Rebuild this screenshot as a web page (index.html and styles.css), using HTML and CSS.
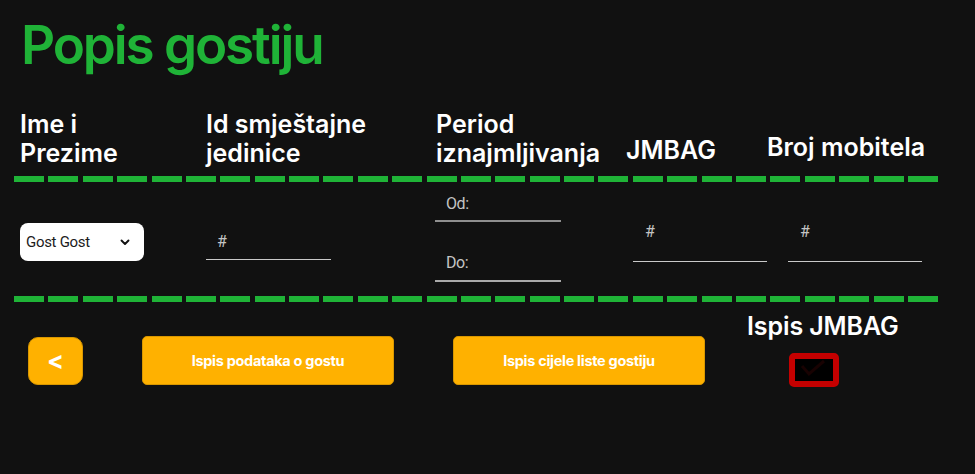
FILE: index.html
```html
<!DOCTYPE html>
<html lang="hr">
<head>
<meta charset="utf-8">
<title>Popis gostiju</title>
<link rel="stylesheet" href="styles.css">
</head>
<body>
<main class="page">
  <h1 class="title">Popis gostiju</h1>

  <div class="grid head-row">
    <div class="th th-name">Ime i<br>Prezime</div>
    <div class="th th-id">Id smještajne<br>jedinice</div>
    <div class="th th-period">Period<br>iznajmljivanja</div>
    <div class="th th-jmbag">JMBAG</div>
    <div class="th th-phone">Broj mobitela</div>
  </div>

  <div class="dash"></div>

  <div class="grid data-row">
    <div class="cell cell-name">
      <div class="select">
        <select class="select-input">
          <option>Gost Gost</option>
        </select>
        <svg class="chevron" width="10" height="7" viewBox="0 0 10 7"><path d="M1.5 1.5 5 5 8.5 1.5" fill="none" stroke="#111" stroke-width="1.9" stroke-linecap="round" stroke-linejoin="round"/></svg>
      </div>
    </div>
    <div class="cell cell-id">
      <input class="field field-id" type="text" placeholder="#">
    </div>
    <div class="cell cell-period">
      <input class="field field-from" type="text" placeholder="Od:">
      <input class="field field-to" type="text" placeholder="Do:">
    </div>
    <div class="cell cell-jmbag">
      <input class="field field-low" type="text" placeholder="#">
    </div>
    <div class="cell cell-phone">
      <input class="field field-low" type="text" placeholder="#">
    </div>
  </div>

  <div class="dash"></div>

  <div class="actions">
    <button class="btn btn-back" type="button">&lt;</button>
    <button class="btn btn-wide btn-guest" type="button">Ispis podataka o gostu</button>
    <button class="btn btn-wide btn-list" type="button">Ispis cijele liste gostiju</button>
    <div class="jmbag-toggle">
      <div class="toggle-label">Ispis JMBAG</div>
      <div class="checkbox">
        <svg width="38" height="22" viewBox="0 0 38 22"><path d="M7 7 14 15 29 2" fill="none" stroke="#180202" stroke-width="3"/></svg>
      </div>
    </div>
  </div>
</main>
</body>
</html>
```
FILE: styles.css
```css
* { box-sizing: border-box; }

html, body {
  margin: 0;
  background: #111111;
}

body {
  font-family: "Inter", "DejaVu Sans", sans-serif;
  color: #ffffff;
  width: 975px;
  height: 474px;
  overflow: hidden;
}

.page {
  display: flex;
  flex-direction: column;
}

.title {
  margin: 15px 0 0 21px;
  height: 60px;
  font-size: 53px;
  line-height: 60px;
  font-weight: 600;
  letter-spacing: -2.1px;
  color: #1fb337;
}

.grid {
  display: grid;
  grid-template-columns: 186px 230px 190px 141px 177px;
  width: 924px;
  margin-left: 14px;
  align-items: start;
}

.head-row {
  height: 101px;
}

.th {
  padding-left: 6px;
  font-size: 25px;
  line-height: 29px;
  font-weight: 600;
  letter-spacing: 0;
  margin-top: 35px;
  white-space: nowrap;
}

.th-jmbag { margin-top: 61px; }
.th-phone { margin-top: 58px; }

.dash {
  width: 924px;
  height: 6px;
  margin-left: 14px;
  background: repeating-linear-gradient(90deg, #1fb337 0 30px, transparent 30px 34.38px);
}

.data-row {
  height: 114px;
}

.cell { padding-left: 6px; }

.cell-name { margin-top: 41px; }
.cell-id { margin-top: 42px; }
.cell-period { margin-top: 4px; display: flex; flex-direction: column; gap: 22px; padding-left: 5px; }
.cell-jmbag { margin-top: 40px; padding-left: 13px; }
.cell-phone { margin-top: 40px; padding-left: 27px; }

.select {
  position: relative;
  width: 124px;
  height: 38px;
}

.select-input {
  appearance: none;
  -webkit-appearance: none;
  width: 100%;
  height: 100%;
  border: none;
  border-radius: 8px;
  background: #ffffff;
  padding: 0 0 0 6px;
  font-family: "Roboto", sans-serif;
  font-size: 15px;
  letter-spacing: -0.3px;
  color: #1c1c1c;
  outline: none;
}

.chevron {
  position: absolute;
  right: 14px;
  top: 16px;
}

.field {
  display: block;
  background: transparent;
  border: none;
  border-bottom: 1px solid #c9c9c9;
  outline: none;
  font-family: "Roboto", sans-serif;
  font-size: 16px;
  letter-spacing: -0.4px;
  color: #dddddd;
  padding: 0 11px;
}

.field::placeholder {
  color: #c4c4c4;
  opacity: 1;
}

.field-id { width: 125px; height: 36px; }

.field-from, .field-to { width: 126px; height: 36px; }
.field-from { border-bottom: 2px solid #8f8f8f; }
.field-to { height: 38px; border-bottom: 2px solid #aaaaaa; }

.field-low {
  width: 134px;
  height: 40px;
  padding: 0 12px 20px;
}

.actions {
  display: flex;
  align-items: flex-start;
  padding-left: 28px;
}

.btn {
  border: 1px solid #d99700;
  background: #ffb100;
  color: #ffffff;
  font-family: "Inter", sans-serif;
  font-weight: 700;
  cursor: pointer;
}

.btn-back {
  width: 55px;
  height: 48px;
  margin-top: 35px;
  border-radius: 10px;
  font-size: 25px;
  line-height: 1;
  padding: 0 0 2px;
}

.btn-wide {
  width: 252px;
  height: 49px;
  margin-top: 34px;
  border-radius: 5px;
  font-size: 14.5px;
  letter-spacing: -0.3px;
}

.btn-guest { margin-left: 59px; }
.btn-list { margin-left: 59px; }

.jmbag-toggle {
  margin-left: 42px;
  margin-top: 10px;
  display: flex;
  flex-direction: column;
}

.toggle-label {
  font-size: 25px;
  line-height: 29px;
  font-weight: 600;
  letter-spacing: -0.1px;
  white-space: nowrap;
}

.checkbox {
  margin: 12px 0 0 42px;
  width: 50px;
  height: 34px;
  border: 6px solid #c40000;
  border-radius: 5px;
  background: #000000;
  display: flex;
}
```
